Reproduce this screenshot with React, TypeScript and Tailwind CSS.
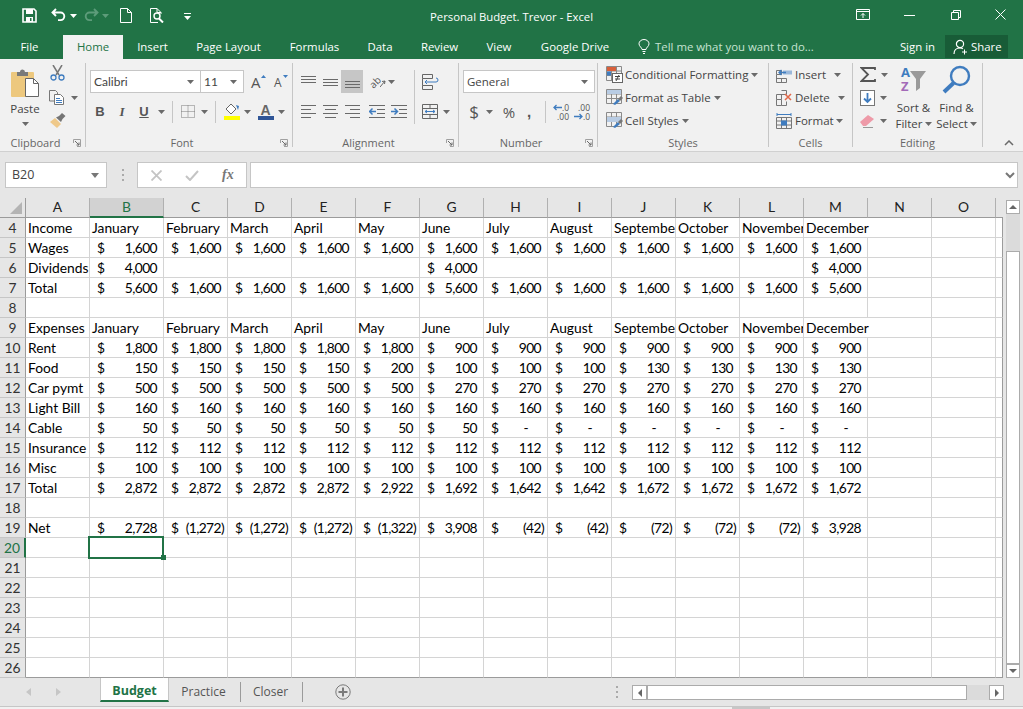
/**
 * App — Excel 2016 window showing the "Personal Budget" sheet.
 */

import type { ReactNode } from 'react';

const UI = "font-['Open_Sans',sans-serif]";
const CELL = "font-['Lato',sans-serif]";
const ICON = '#6a6a6a';
const BLUE = '#3f7cbf';

const MONTHS = ['January', 'February', 'March', 'April', 'May', 'June', 'July', 'August', 'September', 'October', 'November', 'December'];
const COLUMNS = ['A', 'B', 'C', 'D', 'E', 'F', 'G', 'H', 'I', 'J', 'K', 'L', 'M', 'N', 'O'];

const fill = (n: number, v: string) => Array<string>(n).fill(v);
const dollars = (...v: string[]) => v.map((x) => '$' + x);

const SHEET: Record<number, string[]> = {
  4: ['Income', ...MONTHS],
  5: ['Wages', ...dollars(...fill(12, '1,600'))],
  6: ['Dividends', '$4,000', '', '', '', '', '$4,000', '', '', '', '', '', '$4,000'],
  7: ['Total', ...dollars('5,600', ...fill(4, '1,600'), '5,600', ...fill(5, '1,600'), '5,600')],
  9: ['Expenses', ...MONTHS],
  10: ['Rent', ...dollars(...fill(5, '1,800'), ...fill(7, '900'))],
  11: ['Food', ...dollars(...fill(4, '150'), '200', ...fill(3, '100'), ...fill(4, '130'))],
  12: ['Car pymt', ...dollars(...fill(5, '500'), ...fill(7, '270'))],
  13: ['Light Bill', ...dollars(...fill(12, '160'))],
  14: ['Cable', ...dollars(...fill(6, '50'), ...fill(6, '-'))],
  15: ['Insurance', ...dollars(...fill(12, '112'))],
  16: ['Misc', ...dollars(...fill(12, '100'))],
  17: ['Total', ...dollars(...fill(4, '2,872'), '2,922', '1,692', '1,642', '1,642', ...fill(4, '1,672'))],
  19: ['Net', ...dollars('2,728', ...fill(3, '(1,272)'), '(1,322)', '3,908', '(42)', '(42)', ...fill(3, '(72)'), '3,928')],
};

const ROWS = Array.from({ length: 23 }, (_, i) => i + 4);

function Caret({ color = ICON, className = '' }: { color?: string; className?: string }) {
  return (
    <svg width="7" height="4" viewBox="0 0 7 4" className={'shrink-0 ' + className}>
      <path d="M0 0h7L3.5 4z" fill={color} />
    </svg>
  );
}

function Lines({ rows, width = 15, color = ICON }: { rows: [number, number, number][]; width?: number; color?: string }) {
  return (
    <svg width={width} height="13" viewBox={'0 0 ' + width + ' 13'} className="shrink-0">
      {rows.map(([y, a, b]) => (
        <rect key={y} x={a} y={y} width={b - a} height="1" fill={color} />
      ))}
    </svg>
  );
}

function QuickAccess() {
  return (
    <div className="flex w-[430px] shrink-0 items-start pl-[22px] pt-[8px]">
      <svg width="15" height="15" viewBox="0 0 15 15">
        <path d="M1 1h11l2 2v11H1z" fill="none" stroke="#fff" strokeWidth="1.6" />
        <rect x="4" y="1" width="7" height="5" fill="#fff" />
        <rect x="4" y="9" width="7" height="5" fill="#fff" />
        <rect x="8" y="10" width="1.5" height="3" fill="#217346" />
      </svg>
      <svg width="15" height="14" viewBox="0 0 15 14" className="ml-[14px]">
        <path d="M5 1 1.5 4.5 5 8M2 4.5h7.5a3.8 3.8 0 0 1 0 7.6H7" fill="none" stroke="#fff" strokeWidth="1.9" />
      </svg>
      <Caret color="#fff" className="ml-[4px] mt-[6px]" />
      <svg width="15" height="14" viewBox="0 0 15 14" className="ml-[7px]">
        <path d="M10 1l3.5 3.5L10 8M13 4.5H5.5a3.8 3.8 0 0 0 0 7.6H8" fill="none" stroke="#5d9c7a" strokeWidth="1.9" />
      </svg>
      <Caret color="#5d9c7a" className="ml-[3px] mt-[6px]" />
      <svg width="12" height="15" viewBox="0 0 12 15" className="ml-[11px]">
        <path d="M.5.5h7l4 4v10H.5zM7.5.5v4h4" fill="none" stroke="#fff" />
      </svg>
      <svg width="16" height="15" viewBox="0 0 16 15" className="ml-[18px]">
        <path d="M11 6V4.5l-4-4H.5v14H8M7 .5v4h4" fill="none" stroke="#fff" />
        <circle cx="7" cy="8" r="3" fill="none" stroke="#fff" strokeWidth="1.4" />
        <path d="M9 10.5l4 4" stroke="#fff" strokeWidth="2" />
      </svg>
      <svg width="7" height="8" viewBox="0 0 7 8" className="ml-[18px] mt-[5px]">
        <rect x="0" y="0" width="7" height="1" fill="#fff" />
        <path d="M0 3h7L3.5 7z" fill="#fff" />
      </svg>
    </div>
  );
}

function WindowControls() {
  return (
    <div className="flex flex-1 items-start justify-end pt-[9px]">
      <svg width="14" height="12" viewBox="0 0 14 12" className="mr-[34px]">
        <path d="M.5 .5h13v10H.5zM.5 2.5h13" fill="none" stroke="#fff" />
        <path d="M7 9V4.5M5 6.5l2-2 2 2" fill="none" stroke="#fff" />
      </svg>
      <svg width="11" height="12" viewBox="0 0 11 12" className="mr-[36px]">
        <rect x="0" y="6" width="11" height="1" fill="#fff" />
      </svg>
      <svg width="10" height="10" viewBox="0 0 10 10" className="mr-[34px] mt-px">
        <path d="M2.5 2.5V.5h7v7h-2M.5 2.5h7v7h-7z" fill="none" stroke="#fff" />
      </svg>
      <svg width="11" height="11" viewBox="0 0 11 11" className="mr-[17px]">
        <path d="M.5.5l10 10M10.5.5l-10 10" stroke="#fff" />
      </svg>
    </div>
  );
}

function TitleBar() {
  return (
    <div className={'flex h-[35px] bg-[#217346] text-white ' + UI}>
      <QuickAccess />
      <div className="w-[162px] shrink-0 pt-[9px] text-[11.3px] leading-[16px] whitespace-nowrap">Personal Budget. Trevor - Excel</div>
      <WindowControls />
    </div>
  );
}

function RibbonTab({ label, className, active }: { label: string; className: string; active?: boolean }) {
  return (
    <div className={'flex h-[24px] shrink-0 items-center justify-center ' + className + (active ? ' bg-[#f1f1f1] text-[#217346]' : ' text-white')}>
      {label}
    </div>
  );
}

function TabBar() {
  return (
    <div className={'flex h-[24px] items-center bg-[#217346] text-[11.4px] ' + UI}>
      <RibbonTab label="File" className="w-[59px] mr-[4px]" />
      <RibbonTab label="Home" className="w-[60px]" active />
      <RibbonTab label="Insert" className="w-[59px]" />
      <RibbonTab label="Page Layout" className="w-[93px]" />
      <RibbonTab label="Formulas" className="w-[79px]" />
      <RibbonTab label="Data" className="w-[52px]" />
      <RibbonTab label="Review" className="w-[67px]" />
      <RibbonTab label="View" className="w-[52px]" />
      <RibbonTab label="Google Drive" className="w-[100px]" />
      <div className="ml-[13px] flex flex-1 items-center gap-[5px] text-[#c6e3d2]">
        <svg width="12" height="15" viewBox="0 0 12 15">
          <path d="M4 10.5C4 8.5 1 7.5 1 4.8a5 4.3 0 0 1 10 0C11 7.5 8 8.5 8 10.5zM4.5 12.5h3M5 14.5h2" fill="none" stroke="#fff" />
        </svg>
        Tell me what you want to do...
      </div>
      <div className="mr-[10px] text-white">Sign in</div>
      <div className="mb-px mr-[15px] flex h-[23px] w-[63px] items-center gap-[3px] bg-[#185c37] pl-[8px] text-white">
        <svg width="15" height="16" viewBox="0 0 15 16">
          <circle cx="7" cy="5" r="3.6" fill="none" stroke="#fff" strokeWidth="1.2" />
          <path d="M1 15c0-4 2-6 6-6 1 0 2 .2 3 .7" fill="none" stroke="#fff" strokeWidth="1.2" />
          <path d="M11.5 10.5v5M9 13h5" stroke="#fff" />
        </svg>
        Share
      </div>
    </div>
  );
}

function Launcher() {
  return (
    <svg width="8" height="8" viewBox="0 0 8 8" className="absolute right-[4px] top-[3px]">
      <path d="M.5 4V.5H7.5V7.5H4" fill="none" stroke="#a0a0a0" />
      <path d="M2 2l4 4M6 3.5V6H3.5" fill="none" stroke="#6a6a6a" />
    </svg>
  );
}

function Group({ label, className, launcher, children }: { label: string; className: string; launcher?: boolean; children: ReactNode }) {
  return (
    <div className={'flex h-[84px] shrink-0 flex-col border-r border-[#c6c6c6] ' + className}>
      <div className="h-[73px] shrink-0">{children}</div>
      {/* the label sits centred on what is left beside the launcher, and hangs just below the separator */}
      <div className={'relative flex h-[14px] shrink-0 items-center justify-center text-[11px] leading-[14px] text-[#666] ' + (launcher ? 'pr-[14px]' : '')}>
        {label}
        {launcher && <Launcher />}
      </div>
    </div>
  );
}

function ClipboardGroup() {
  return (
    <Group label="Clipboard" className="w-[86px]" launcher>
      <div className="flex">
        <div className="ml-[4px] flex w-[42px] flex-col items-center pt-[4px]">
          <svg width="29" height="31" viewBox="0 0 29 31">
            <rect x="0" y="5" width="23" height="25" rx="1" fill="#edc87e" />
            <path d="M6 5h3a2.5 2.5 0 0 1 5 0h3v4H6z" fill="#7a7a7a" />
            <path d="M14.5 11.5h8l5 5v13h-13z" fill="#fff" stroke="#666" />
            <path d="M22.5 11.5v5h5" fill="none" stroke="#666" />
          </svg>
          <div className="mt-[3px] text-[11.5px] leading-[16px] text-[#444]">Paste</div>
          <Caret className="mt-[5px]" />
        </div>
        <div className="ml-[3px] flex flex-col">
          <div className="flex h-[23px] items-start">
            <svg width="15" height="16" viewBox="0 0 15 16" className="ml-px mt-[2px]">
              <path d="M3 0l6 10M12 0L6 10" stroke="#777" strokeWidth="1.5" />
              <circle cx="3.5" cy="12.5" r="2.5" fill="none" stroke={BLUE} strokeWidth="1.3" />
              <circle cx="11.5" cy="12.5" r="2.5" fill="none" stroke={BLUE} strokeWidth="1.3" />
            </svg>
          </div>
          <div className="flex h-[23px] items-center">
            <svg width="16" height="15" viewBox="0 0 16 15">
              <path d="M5 11H.5V.5h6l2 2V4" fill="none" stroke="#777" />
              <path d="M5.5 4.5h6l3 3v7h-9z" fill="#fff" stroke="#777" />
              <path d="M7 8.5h4M7 10.5h6M7 12.5h6" stroke={BLUE} />
            </svg>
            <Caret className="ml-[6px]" />
          </div>
          <div className="flex h-[23px] items-center">
            <svg width="17" height="15" viewBox="0 0 17 15">
              <path d="M1 9l5-4 6 6-4 4z" fill="#efc98a" />
              <path d="M7 4.5l3-1.5 3-3 3.5 3-3 3-1.5 3z" fill="#757575" />
            </svg>
          </div>
        </div>
      </div>
    </Group>
  );
}

function Select({ label, className }: { label: string; className: string }) {
  return (
    <div className={'flex h-[23px] shrink-0 items-center justify-between border border-[#c6c6c6] bg-white pl-[3px] pr-[6px] text-[#444] ' + className}>
      <span>{label}</span>
      <Caret />
    </div>
  );
}

function Sep({ className = 'h-[22px]' }: { className?: string }) {
  return <div className={'w-px shrink-0 bg-[#c6c6c6] ' + className} />;
}

function FontGroup() {
  return (
    <Group label="Font" className="w-[207px]" launcher>
      <div className="flex items-center pl-[4px] pt-[7px]">
        <Select label="Calibri" className="w-[111px] font-['Lato'] text-[12px]" />
        <Select label="11" className="ml-[-1px] w-[44px] font-['Lato'] text-[12px]" />
        <div className="ml-[7px] flex w-[16px] items-start text-[#555]">
          <span className="text-[15px] leading-[20px]">A</span>
          <svg width="5" height="3" viewBox="0 0 5 3" className="mt-[3px]"><path d="M0 3h5L2.5 0z" fill={BLUE} /></svg>
        </div>
        <div className="ml-[7px] flex w-[16px] items-start text-[#555]">
          <span className="pt-[2px] text-[12px] leading-[18px]">A</span>
          <svg width="5" height="3" viewBox="0 0 5 3" className="ml-px mt-[3px]"><path d="M0 0h5L2.5 3z" fill={BLUE} /></svg>
        </div>
      </div>
      <div className="mt-[7px] flex h-[23px] items-center pl-[3px] text-[13px] text-[#555]">
        <span className="w-[22px] text-center font-['Liberation_Sans'] font-bold">B</span>
        <span className="w-[22px] text-center font-['Liberation_Serif'] font-bold italic">I</span>
        <span className="w-[22px] text-center font-['Liberation_Sans'] font-bold underline">U</span>
        <div className="flex w-[12px] justify-center"><Caret /></div>
        <Sep className="ml-[5px] h-[22px]" />
        <svg width="14" height="13" viewBox="0 0 14 13" className="ml-[8px]">
          <path d="M.5.5h13v12H.5zM7 .5v12M.5 6.5h13" fill="none" stroke="#7a7a7a" strokeDasharray="1 1" />
        </svg>
        <div className="flex w-[18px] justify-center"><Caret /></div>
        <Sep className="ml-[2px] h-[22px]" />
        <div className="ml-[7px] flex w-[17px] flex-col items-center">
          <svg width="16" height="13" viewBox="0 0 16 13">
            <path d="M7 1l5 5-5 5-5-5z" fill="#fff" stroke="#666" />
            <path d="M12 2l3 1-1 4z" fill={BLUE} />
          </svg>
          <div className="h-[4px] w-[16px] bg-[#ffff00]" />
        </div>
        <div className="flex w-[14px] justify-center"><Caret /></div>
        <div className="ml-[3px] flex w-[17px] flex-col items-center">
          <span className="h-[13px] font-['Liberation_Sans'] text-[14px] font-bold leading-[14px] text-[#666]">A</span>
          <div className="h-[4px] w-[16px] bg-[#2f5597]" />
        </div>
        <div className="flex w-[14px] justify-center"><Caret /></div>
      </div>
    </Group>
  );
}

const TOP: [number, number, number][] = [[1, 0, 15], [4, 0, 15], [7, 0, 15]];
const MID: [number, number, number][] = [[4, 0, 15], [7, 0, 15], [10, 0, 15]];
const LOW: [number, number, number][] = [[6, 0, 15], [9, 0, 15], [12, 0, 15]];
const LEFT: [number, number, number][] = [[0, 0, 15], [4, 0, 10], [8, 0, 15], [12, 0, 10]];
const CENTER: [number, number, number][] = [[0, 0, 15], [4, 2, 13], [8, 0, 15], [12, 2, 13]];
const RIGHT: [number, number, number][] = [[0, 0, 15], [4, 5, 15], [8, 0, 15], [12, 5, 15]];

function Indent({ flip }: { flip?: boolean }) {
  return (
    <svg width="16" height="13" viewBox="0 0 16 13" className="shrink-0">
      <path d="M0 .5h16M8 4.5h8M8 8.5h8M0 12.5h16" stroke={ICON} />
      <path d={flip ? 'M0 6.5h6M3.5 3.5l3 3-3 3' : 'M7 6.5H1M3.5 3.5l-3 3 3 3'} fill="none" stroke={BLUE} strokeWidth="1.5" />
    </svg>
  );
}

function AlignmentGroup() {
  return (
    <Group label="Alignment" className="w-[166px]" launcher>
      <div className="flex pl-[4px] pt-[7px]">
        <div className="flex w-[117px] flex-col gap-[7px]">
          <div className="flex h-[23px] items-center">
            <div className="flex w-[22px] justify-center"><Lines rows={TOP} /></div>
            <div className="flex w-[22px] justify-center"><Lines rows={MID} /></div>
            <div className="flex h-[23px] w-[22px] items-center justify-center bg-[#c6c6c6]"><Lines rows={LOW} /></div>
            <div className="ml-[6px] flex h-[16px] w-[16px] items-center">
              <span className="-rotate-45 text-[10px] leading-[10px] text-[#555]">ab</span>
              <svg width="6" height="8" viewBox="0 0 6 8" className="-ml-px mt-[3px] shrink-0">
                <path d="M0 8l5-6M5 2l-3 .5M5 2l-.5 3" fill="none" stroke="#666" />
              </svg>
            </div>
            <Caret className="ml-[3px]" />
          </div>
          <div className="flex h-[23px] items-center">
            <div className="flex w-[22px] justify-center"><Lines rows={LEFT} /></div>
            <div className="flex w-[22px] justify-center"><Lines rows={CENTER} /></div>
            <div className="flex w-[22px] justify-center"><Lines rows={RIGHT} /></div>
            <div className="ml-[6px]"><Indent /></div>
            <div className="ml-[6px]"><Indent flip /></div>
          </div>
        </div>
        <Sep className="h-[54px]" />
        <div className="ml-[7px] flex flex-col gap-[7px]">
          <div className="flex h-[23px] items-center">
            <svg width="17" height="16" viewBox="0 0 17 16">
              <path d="M.5.5h10v4H.5zM.5 11.5h10v4H.5zM.5 4.5v7" fill="none" stroke="#666" />
              <path d="M3 8h11a2 2 0 0 0 0-4M3 8l2-2M3 8l2 2" fill="none" stroke={BLUE} />
            </svg>
          </div>
          <div className="flex h-[23px] items-center">
            <svg width="16" height="15" viewBox="0 0 16 15">
              <path d="M.5.5h15v14H.5zM.5 4.5h15M.5 10.5h15M8 .5v4M8 10.5v4" fill="none" stroke="#666" />
              <path d="M3 7.5h10M3 7.5l2-1.5M3 7.5l2 1.5M13 7.5l-2-1.5M13 7.5l-2 1.5" fill="none" stroke={BLUE} />
            </svg>
            <Caret className="ml-[5px]" />
          </div>
        </div>
      </div>
    </Group>
  );
}

function NumberGroup() {
  return (
    <Group label="Number" className="w-[139px]" launcher>
      <div className="pl-[4px] pt-[7px]">
        <Select label="General" className="w-[132px] text-[11.5px]" />
      </div>
      <div className="mt-[7px] flex h-[23px] items-center text-[#555]">
        <span className="ml-[10px] w-[10px] text-center text-[17px] leading-[20px]">$</span>
        <Caret className="ml-[7px]" />
        <span className="ml-[8px] w-[16px] text-center text-[15px] leading-[20px]">%</span>
        <span className="ml-[9px] w-[6px] text-center font-['Liberation_Sans'] text-[15px] font-bold leading-[10px]">,</span>
        <Sep className="ml-[13px] h-[22px]" />
        <div className="ml-[7px] flex w-[16px] flex-col items-end text-[8.5px] leading-[9px]">
          <div className="flex items-center">
            <svg width="9" height="7" viewBox="0 0 9 7"><path d="M9 3.5H1M3.5 1 1 3.5 3.5 6" fill="none" stroke={BLUE} strokeWidth="1.3" /></svg>
            <span>.0</span>
          </div>
          <span>.00</span>
        </div>
        <div className="ml-[5px] flex w-[16px] flex-col items-end text-[8.5px] leading-[9px]">
          <span>.00</span>
          <div className="flex items-center">
            <svg width="9" height="7" viewBox="0 0 9 7"><path d="M0 3.5h8M5.5 1 8 3.5 5.5 6" fill="none" stroke={BLUE} strokeWidth="1.3" /></svg>
            <span>.0</span>
          </div>
        </div>
      </div>
    </Group>
  );
}

function TableIcon({ variant }: { variant: 'rules' | 'table' | 'styles' }) {
  return (
    <svg width="17" height="17" viewBox="0 0 17 17" className="shrink-0">
      <path d="M.5.5h15v14H.5zM.5 5h15M.5 9.5h15M5.5.5v14M10.5.5v14" fill="none" stroke="#8a8a8a" />
      {variant === 'rules' && (
        <>
          <rect x="1" y="1" width="9" height="4" fill="#d9603b" />
          <rect x="1" y="5.5" width="4" height="4" fill={BLUE} />
          <rect x="6.5" y="7.5" width="10" height="9" fill="#fff" stroke="#666" />
          <path d="M9 10.5h5M9 13h5M10 15l3-6" stroke="#444" />
        </>
      )}
      {variant === 'table' && (
        <>
          <rect x="1" y="1" width="14" height="4" fill="#b8cce4" />
          <path d="M7 15l5-5 2 2-5 4z" fill={BLUE} />
          <path d="M12 10l3-3 2 2-3 3z" fill="#777" />
        </>
      )}
      {variant === 'styles' && (
        <>
          <rect x="1" y="5" width="14" height="5" fill="#b8cce4" />
          <path d="M7 15l5-5 2 2-5 4z" fill={BLUE} />
          <path d="M12 10l3-3 2 2-3 3z" fill="#777" />
        </>
      )}
    </svg>
  );
}

function StylesGroup() {
  return (
    <Group label="Styles" className="w-[171px]">
      <div className="flex flex-col pl-[8px] text-[11.5px] text-[#444]">
        <div className="flex h-[23px] items-center"><TableIcon variant="rules" /><span className="ml-[2px] mr-[3px]">Conditional Formatting</span><Caret /></div>
        <div className="flex h-[23px] items-center"><TableIcon variant="table" /><span className="ml-[2px] mr-[3px]">Format as Table</span><Caret /></div>
        <div className="flex h-[23px] items-center"><TableIcon variant="styles" /><span className="ml-[2px] mr-[3px]">Cell Styles</span><Caret /></div>
      </div>
    </Group>
  );
}

function CellsGroup() {
  return (
    <Group label="Cells" className="w-[84px]">
      <div className="flex flex-col pl-[7px] text-[11.5px] text-[#444]">
        <div className="flex h-[23px] items-center">
          <svg width="16" height="16" viewBox="0 0 16 16" className="mr-[3px] shrink-0">
            <path d="M.5 3.5h5v4h-5zM.5 7.5v8h10v-4M.5 11.5h10M5.5 11.5v4" fill="none" stroke="#777" />
            <path d="M7 5.5h9" stroke="#9ab8da" strokeWidth="4" />
            <path d="M10 5.5H3M5.5 3 3 5.5 5.5 8" fill="none" stroke={BLUE} strokeWidth="1.3" />
          </svg>
          Insert<Caret className="ml-[8px]" />
        </div>
        <div className="flex h-[23px] items-center">
          <svg width="16" height="16" viewBox="0 0 16 16" className="mr-[3px] shrink-0">
            <path d="M5.5 .5h5v4M.5 4.5h10M.5 4.5v5h5v-5M.5 9.5v6h5v-6M5.5 15.5h5v-4" fill="none" stroke="#777" />
            <path d="M9 4l6 6M15 4l-6 6" stroke="#e2694a" strokeWidth="1.5" />
          </svg>
          Delete<Caret className="ml-[8px]" />
        </div>
        <div className="flex h-[23px] items-center">
          <svg width="16" height="16" viewBox="0 0 16 16" className="mr-[3px] shrink-0">
            <path d="M.5 4.5h15v11H.5zM.5 8h15M.5 12h15M5.5 4.5v11M10.5 4.5v11" fill="none" stroke="#777" />
            <rect x="5" y="7.5" width="6" height="5" fill={BLUE} />
            <path d="M1 1.5h14M1 0v3M15 0v3" stroke={BLUE} />
          </svg>
          Format<Caret className="ml-[2px]" />
        </div>
      </div>
    </Group>
  );
}

function EditingGroup() {
  return (
    <Group label="Editing" className="w-[130px]">
      <div className="flex text-[11.5px] text-[#444]">
        <div className="ml-[7px] flex w-[33px] shrink-0 flex-col">
          <div className="flex h-[23px] items-center">
            <svg width="16" height="15" viewBox="0 0 16 15">
              <path d="M15 3V1H1.5L8 7.5 1.5 14H15v-2" fill="none" stroke="#555" strokeWidth="1.8" />
            </svg>
            <Caret className="ml-[5px]" />
          </div>
          <div className="flex h-[23px] items-center">
            <svg width="15" height="16" viewBox="0 0 15 16">
              <rect x=".5" y=".5" width="14" height="15" fill="#fff" stroke="#777" />
              <path d="M7.5 3v9M4 8.5 7.5 12 11 8.5" fill="none" stroke={BLUE} strokeWidth="1.8" />
            </svg>
            <Caret className="ml-[5px]" />
          </div>
          <div className="flex h-[23px] items-center">
            <svg width="15" height="14" viewBox="0 0 15 14">
              <path d="M0 8l8-7 6 4-8 7H3z" fill="#ee9aa8" />
              <path d="M3 13.5h10" stroke="#999" />
            </svg>
            <Caret className="ml-[5px]" />
          </div>
        </div>
        <div className="flex w-[41px] shrink-0 flex-col items-center pt-[2px] leading-[16px]">
          <div className="flex h-[30px] items-start">
            <div className="flex flex-col text-[13px] font-bold leading-[14px]">
              <span className="text-[#3f7cbf]">A</span>
              <span className="text-[#a36ab8]">Z</span>
            </div>
            <svg width="16" height="20" viewBox="0 0 16 20" className="mt-[6px]">
              <path d="M0 0h16L10 8v9l-4 3V8z" fill="#9a9a9a" />
            </svg>
          </div>
          <span className="mt-[5px]">Sort &amp;</span>
          <span className="flex items-center gap-[2px]">Filter<Caret /></span>
        </div>
        <div className="flex w-[45px] shrink-0 flex-col items-center pt-[2px] leading-[16px]">
          <svg width="29" height="30" viewBox="0 0 29 30">
            <circle cx="18" cy="11" r="9" fill="none" stroke="#3f7cbf" strokeWidth="2.4" />
            <path d="M11.5 18 2 27" stroke="#3f7cbf" strokeWidth="4" />
          </svg>
          <span className="mt-[5px]">Find &amp;</span>
          <span className="flex items-center gap-[2px]">Select<Caret /></span>
        </div>
      </div>
    </Group>
  );
}

function Ribbon() {
  return (
    <div className={'flex h-[93px] border-b border-[#d0d0d0] bg-[#f1f1f1] pt-[4px] ' + UI}>
      <ClipboardGroup />
      <FontGroup />
      <AlignmentGroup />
      <NumberGroup />
      <StylesGroup />
      <CellsGroup />
      <EditingGroup />
      <div className="flex h-[84px] flex-1 items-end justify-end pb-[1px] pr-[9px]">
        <svg width="10" height="6" viewBox="0 0 10 6"><path d="M1 5l4-4 4 4" fill="none" stroke="#6a6a6a" strokeWidth="1.5" /></svg>
      </div>
    </div>
  );
}

function FormulaBar() {
  return (
    <div className={'flex h-[46px] items-start bg-[#e6e6e6] pt-[10px] ' + UI}>
      <div className="ml-[5px] flex h-[26px] w-[102px] items-center justify-between border border-[#c6c6c6] bg-white pl-[6px] pr-[7px] text-[12.5px] text-[#444]">
        B20
        <svg width="8" height="5" viewBox="0 0 8 5"><path d="M0 0h8L4 5z" fill="#777" /></svg>
      </div>
      <div className="ml-[14px] flex h-[26px] w-[3px] flex-col items-center justify-center gap-[3px]">
        <div className="h-[2px] w-[2px] bg-[#aaa]" />
        <div className="h-[2px] w-[2px] bg-[#aaa]" />
        <div className="h-[2px] w-[2px] bg-[#aaa]" />
      </div>
      <div className="ml-[13px] flex h-[26px] w-[110px] items-center border border-[#c6c6c6] bg-white pl-[13px]">
        <svg width="11" height="11" viewBox="0 0 11 11"><path d="M.5.5l10 10M10.5.5l-10 10" stroke="#c4c4c4" strokeWidth="1.8" /></svg>
        <svg width="14" height="11" viewBox="0 0 14 11" className="ml-[23px]"><path d="M1 6l4 4 8-9" fill="none" stroke="#c4c4c4" strokeWidth="2" /></svg>
        <span className="ml-[23px] font-['Liberation_Serif'] text-[14px] font-bold italic leading-none text-[#777]">fx</span>
      </div>
      <div className="ml-[3px] flex h-[26px] w-[768px] items-center justify-end border border-[#c6c6c6] bg-white pr-[2px]">
        <svg width="10" height="7" viewBox="0 0 10 7"><path d="M1 1l4 4 4-4" fill="none" stroke="#777" strokeWidth="2" /></svg>
      </div>
    </div>
  );
}

function Money({ value }: { value: string }) {
  const amount = value.slice(1);
  const negative = amount.startsWith('(');
  const dash = amount === '-';
  return (
    <div className={'flex h-full w-full items-center justify-between pl-[7px] tracking-[-0.6px] ' + (negative ? 'pr-[3px]' : dash ? 'pr-[19px]' : 'pr-[6px]')}>
      <span>$</span>
      <span>{amount}</span>
    </div>
  );
}

function Cell({ value, col, row }: { value: string; col: number; row: number }) {
  // December is the only label that spills over into an empty neighbour
  const spills = value === 'December';
  const selected = col === 1 && row === 20;
  return (
    <div
      className={
        'relative flex h-[20px] items-center border-b border-[#d4d4d4] pt-px text-[13.8px] whitespace-nowrap text-black ' +
        (spills ? 'z-10 overflow-visible border-r-0 ' : 'border-r ') +
        (row === 26 ? 'border-b-[#9b9b9b] ' : '') +
        (value && !spills ? 'overflow-hidden ' : '') +
        (value.startsWith('$') ? '' : 'pl-[2px]')
      }
    >
      {value.startsWith('$') ? <Money value={value} /> : value}
      {selected && (
        <div className="absolute left-[-2px] top-[-2px] z-20 h-[23px] w-[76px] border-2 border-[#217346]">
          <div className="absolute bottom-[-3px] right-[-4px] h-[5px] w-[5px] bg-[#217346]" />
        </div>
      )}
    </div>
  );
}

function Sheet() {
  return (
    <div className={'grid w-[1003px] grid-cols-[26px_64px_74px_repeat(13,64px)_7px] ' + CELL}>
      <div className="flex h-[20px] items-end justify-end border-b border-r border-[#9b9b9b] bg-[#e6e6e6] pb-[3px] pr-[3px]">
        <svg width="12" height="12" viewBox="0 0 12 12"><path d="M12 0v12H0z" fill="#b4b4b4" /></svg>
      </div>
      {COLUMNS.map((c) => (
        <div
          key={c}
          className={
            'flex h-[20px] items-center justify-center border-r border-[#b0b0b0] text-[13.8px] ' +
            (c === 'B' ? 'border-b-2 border-b-[#217346] bg-[#d2d2d2] text-[#217346]' : 'border-b border-b-[#9b9b9b] bg-[#e6e6e6] text-[#222]')
          }
        >
          {c}
        </div>
      ))}
      <div className="h-[20px] border-b border-b-[#9b9b9b] bg-[#e6e6e6]" />
      {ROWS.map((row) => (
        <div key={row} className="contents">
          <div
            className={
              'flex h-[20px] items-center justify-center border-b pt-px text-[13.8px] ' +
              (row === 20
                ? 'border-r-2 border-b-[#c6c6c6] border-r-[#217346] bg-[#d2d2d2] text-[#217346]'
                : 'border-r border-b-[#c6c6c6] border-r-[#9b9b9b] bg-[#e6e6e6] text-[#333]')
            }
          >
            {row}
          </div>
          {COLUMNS.map((_, col) => (
            <Cell key={col} col={col} row={row} value={SHEET[row]?.[col] ?? ''} />
          ))}
          <div className={'h-[20px] border-b border-r border-[#d4d4d4] border-r-[#9b9b9b] ' + (row === 26 ? 'border-b-[#9b9b9b]' : '')} />
        </div>
      ))}
    </div>
  );
}

function ArrowButton({ d, className }: { d: string; className: string }) {
  return (
    <div className={'flex shrink-0 items-center justify-center border border-[#ababab] bg-white ' + className}>
      <svg width="8" height="8" viewBox="0 0 8 8"><path d={d} fill="#666" /></svg>
    </div>
  );
}

function VerticalScrollbar() {
  return (
    <div className="ml-[3px] flex w-[14px] flex-col pt-[2px]">
      <ArrowButton d="M0 6h8L4 2z" className="h-[14px] w-[14px]" />
      <div className="h-[37px] bg-[#dbdbdb]" />
      <div className="h-[413px] border border-[#ababab] bg-white" />
      <ArrowButton d="M0 2h8L4 6z" className="h-[14px] w-[14px]" />
    </div>
  );
}

function SheetTabs() {
  return (
    <div className={'flex h-[28px] items-start bg-[#e6e6e6] text-[12px] text-[#555] ' + UI}>
      <div className="flex h-[24px] w-[100px] items-center pl-[26px] pt-[4px]">
        <svg width="6" height="8" viewBox="0 0 6 8"><path d="M5 0v8L0 4z" fill="#c6c6c6" /></svg>
        <svg width="6" height="8" viewBox="0 0 6 8" className="ml-[23px]"><path d="M1 0v8l5-4z" fill="#c6c6c6" /></svg>
      </div>
      <div className="flex h-[24px] w-[69px] items-center justify-center border-x border-b-2 border-x-[#c6c6c6] border-b-[#217346] bg-white pt-[4px] text-[12.5px] font-bold text-[#217346]">
        Budget
      </div>
      <div className="flex h-[24px] w-[69px] items-center justify-center pt-[4px]">Practice</div>
      <div className="ml-[2px] mt-[4px] h-[20px] w-px bg-[#9b9b9b]" />
      <div className="flex h-[24px] w-[59px] items-center justify-center pt-[4px]">Closer</div>
      <div className="ml-[2px] mt-[4px] h-[20px] w-px bg-[#9b9b9b]" />
      <svg width="16" height="16" viewBox="0 0 16 16" className="ml-[32px] mt-[6px]">
        <circle cx="8" cy="8" r="7.2" fill="none" stroke="#7a7a7a" />
        <path d="M8 3.5v9M3.5 8h9" stroke="#7a7a7a" strokeWidth="2" />
      </svg>
      <div className="ml-[264px] mt-[7px] flex h-[14px] w-[3px] flex-col items-center justify-center gap-[3px]">
        <div className="h-[2px] w-[2px] bg-[#aaa]" />
        <div className="h-[2px] w-[2px] bg-[#aaa]" />
        <div className="h-[2px] w-[2px] bg-[#aaa]" />
      </div>
      <div className="ml-[14px] mt-[7px] flex h-[15px] w-[372px]">
        <ArrowButton d="M6 0v8L2 4z" className="w-[15px]" />
        <div className="w-[320px] border border-[#ababab] bg-white" />
        <div className="flex-1 bg-[#dbdbdb]" />
        <ArrowButton d="M2 0v8l4-4z" className="w-[15px]" />
      </div>
    </div>
  );
}

export default function App() {
  return (
    <div className="h-[709px] w-[1023px] overflow-hidden bg-white">
      <TitleBar />
      <TabBar />
      <Ribbon />
      <FormulaBar />
      <div className="flex h-[480px] bg-[#e6e6e6]">
        <div className="bg-white"><Sheet /></div>
        <VerticalScrollbar />
      </div>
      <SheetTabs />
      <div className="flex h-[3px] border-t border-[#c6c6c6] bg-[#f1f1f1] pl-[732px]">
        <div className="h-full w-[38px] bg-[#c6c6c6]" />
      </div>
    </div>
  );
}
